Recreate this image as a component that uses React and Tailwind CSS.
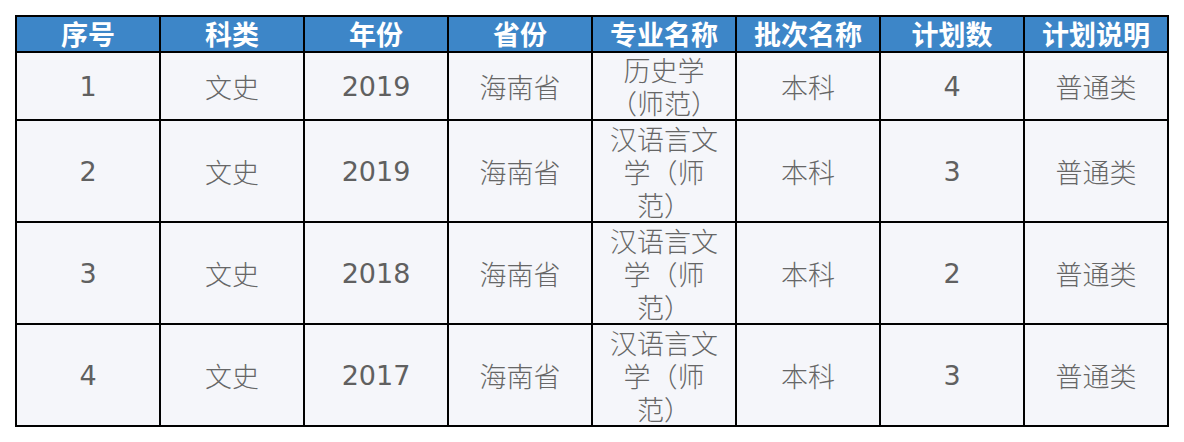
import React from "react";

const headers = ["序号", "科类", "年份", "省份", "专业名称", "批次名称", "计划数", "计划说明"];

const rows = [
  { id: "1", kind: "文史", year: "2019", prov: "海南省", major: "历史学（师范）", batch: "本科", num: "4", note: "普通类", h: "h-[68px]" },
  { id: "2", kind: "文史", year: "2019", prov: "海南省", major: "汉语言文学（师范）", batch: "本科", num: "3", note: "普通类", h: "h-[102px]" },
  { id: "3", kind: "文史", year: "2018", prov: "海南省", major: "汉语言文学（师范）", batch: "本科", num: "2", note: "普通类", h: "h-[102px]" },
  { id: "4", kind: "文史", year: "2017", prov: "海南省", major: "汉语言文学（师范）", batch: "本科", num: "3", note: "普通类", h: "h-[102px]" },
];

function App() {
  return (
    <div className="w-[1184px] h-[442px] bg-white pt-[15px] pl-[15px] font-['DejaVu_Sans','Noto_Sans_CJK_SC',sans-serif]">
      <table className="table-fixed border-collapse border-2 border-black w-[1154px] text-[27px] leading-[33px] text-center">
        <thead>
          <tr className="h-[36px] bg-[#3d86c8]">
            {headers.map((h) => (
              <th key={h} className="border-2 border-black px-1 font-bold text-white font-['Noto_Sans_CJK_SC',sans-serif] leading-[34px] whitespace-nowrap">
                {h}
              </th>
            ))}
          </tr>
        </thead>
        <tbody>
          {rows.map((r) => (
            <tr key={r.id} className={`${r.h} bg-[#f5f6fa] text-[#606060]`}>
              {[r.id, r.kind, r.year, r.prov, r.major, r.batch, r.num, r.note].map((c, i) => (
                <td
                  key={i}
                  className={
                    [0, 2, 6].includes(i)
                      ? "border-2 border-black px-[14px] align-middle"
                      : "border-2 border-black px-[14px] align-middle font-light font-['Noto_Sans_CJK_SC',sans-serif] text-[#666666]"
                  }
                >
                  {c}
                </td>
              ))}
            </tr>
          ))}
        </tbody>
      </table>
    </div>
  );
}

export default App;
